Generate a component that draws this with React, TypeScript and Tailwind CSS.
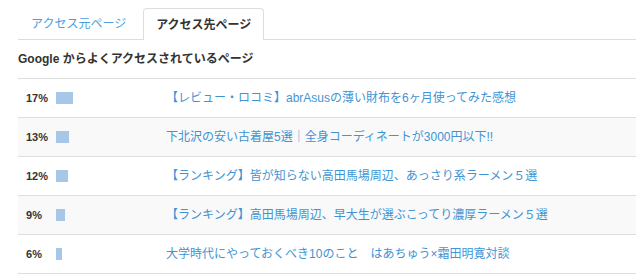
import React from 'react';

const rows = [
  { pct: 17, title: '【レビュー・ロコミ】abrAsusの薄い財布を6ヶ月使ってみた感想' },
  { pct: 13, title: '下北沢の安い古着屋5選｜全身コーディネートが3000円以下!!' },
  { pct: 12, title: '【ランキング】皆が知らない高田馬場周辺、あっさり系ラーメン５選' },
  { pct: 9, title: '【ランキング】高田馬場周辺、早大生が選ぶこってり濃厚ラーメン５選' },
  { pct: 6, title: '大学時代にやっておくべき10のこと　はあちゅう×霜田明寛対談' },
];

export default function App() {
  return (
    <div
      className="w-[636px] h-[274px] bg-white pl-[18px] overflow-hidden"
      style={{ fontFamily: '"Liberation Sans", "Noto Sans CJK JP", sans-serif' }}
    >
      <div className="flex items-end h-[40px] border-b border-[#dddddd]">
        <div className="h-[31px] px-[13px] flex items-center text-[12px] text-[#4aa0dc] mr-[4px]">
          アクセス元ページ
        </div>
        <div className="h-[32px] -mb-px px-[12px] flex items-center text-[12px] font-bold text-[#333333] bg-white border border-b-0 border-[#dddddd] rounded-t-[4px]">
          アクセス先ページ
        </div>
      </div>

      <div className="h-[39px] flex items-center border-b border-[#dddddd] text-[12px] font-bold text-[#333333]">
        Google からよくアクセスされているページ
      </div>

      {rows.map((r, i) => (
        <div
          key={i}
          className={`h-[39px] flex items-center border-b border-[#dddddd] ${i % 2 === 1 ? 'bg-[#f9f9f9]' : 'bg-white'}`}
        >
          <div className="w-[38px] pl-[8px] text-[11px] font-bold text-[#333333]">{r.pct}%</div>
          <div className="w-[110px]">
            <div className="h-[12px] bg-[#a6c7e8]" style={{ width: r.pct }} />
          </div>
          <a className="text-[12px] text-[#3f94d4] whitespace-nowrap">{r.title}</a>
        </div>
      ))}
    </div>
  );
}
